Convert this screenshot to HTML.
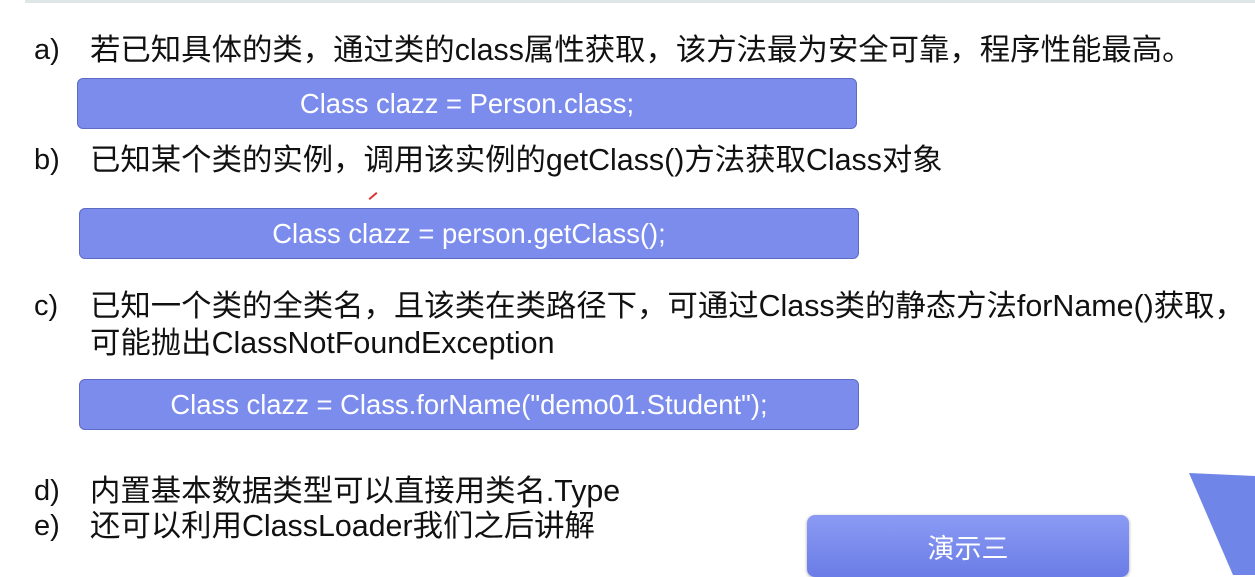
<!DOCTYPE html>
<html><head><meta charset="utf-8"><style>
body{margin:0;width:1255px;height:575px;overflow:hidden;background:#fff;position:relative;font-family:"Liberation Sans","Noto Sans CJK SC",sans-serif;color:#111}
.t{position:absolute;white-space:nowrap;font-size:30.4px;line-height:36px}
.l{position:absolute;left:34px;white-space:nowrap;font-size:29px;line-height:36px}
.box{position:absolute;background:#7b8ced;border:1px solid #5d6bc4;border-radius:6px;color:#fff;font-size:27.4px;display:flex;align-items:center;justify-content:center;box-sizing:border-box}
</style></head><body>
<div style="position:absolute;left:25px;top:0;width:1230px;height:3px;background:#dfe6e6"></div>
<div class="l" style="top:32px">a)</div><div class="t" style="left:90px;top:32px">若已知具体的类，通过类的class属性获取，该方法最为安全可靠，程序性能最高。</div>
<div class="box" style="left:77px;top:78px;width:780px;height:51px">Class clazz = Person.class;</div>
<div class="l" style="top:142px">b)</div><div class="t" style="left:90px;top:142px">已知某个类的实例，调用该实例的getClass()方法获取Class对象</div>
<div style="position:absolute;left:368px;top:195px;width:10px;height:2px;background:#d33;transform:rotate(-40deg)"></div>
<div class="box" style="left:79px;top:208px;width:780px;height:51px">Class clazz = person.getClass();</div>
<div class="l" style="top:288px">c)</div><div class="t" style="left:90px;top:288px">已知一个类的全类名，且该类在类路径下，可通过Class类的静态方法forName()获取，</div>
<div class="t" style="left:90px;top:325px">可能抛出ClassNotFoundException</div>
<div class="box" style="left:79px;top:379px;width:780px;height:51px">Class clazz = Class.forName("demo01.Student");</div>
<div class="l" style="top:473px">d)</div><div class="t" style="left:90px;top:473px">内置基本数据类型可以直接用类名.Type</div>
<div class="l" style="top:508px">e)</div><div class="t" style="left:90px;top:508px">还可以利用ClassLoader我们之后讲解</div>
<div style="position:absolute;left:807px;top:515px;width:322px;height:62px;border-radius:8px;background:linear-gradient(#8b9bf4,#6a7ce6);box-shadow:0 1px 3px rgba(0,0,0,.35);color:#fff;font-size:27px;display:flex;align-items:center;justify-content:center">演示三</div>
<svg style="position:absolute;left:0;top:0" width="1255" height="575"><polygon points="1189,473 1255,476 1255,575 1233,575" fill="#6f86e8"/></svg>
</body></html>
